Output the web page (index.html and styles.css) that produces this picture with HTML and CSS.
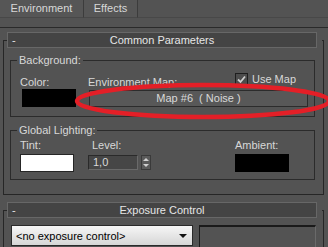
FILE: index.html
```html
<!DOCTYPE html>
<html>
<head>
<meta charset="utf-8">
<link rel="stylesheet" href="styles.css">
</head>
<body>
<div class="tabs">
  <div class="tab tab-env">Environment</div>
  <div class="tab tab-fx">Effects</div>
  <div class="tab-fill"></div>
</div>
<div class="panel">
  <div class="rollout">
    <div class="rollout-head"><span class="minus">-</span><span class="title">Common Parameters</span><span></span></div>
    <div class="rollout-body">
      <fieldset class="group">
        <legend>Background:</legend>
        <div class="bg-row">
          <div class="col col-color">
            <div class="lbl lbl-top">Color:</div>
            <div class="swatch swatch-black swatch-color"></div>
          </div>
          <div class="col col-map">
            <div class="map-top">
              <div class="lbl lbl-top">Environment Map:</div>
              <div class="check">
                <span class="box"><svg width="11" height="11" viewBox="0 0 11 11"><path d="M2 5.5 L4.5 8 L9 2.5" fill="none" stroke="#cfcfcf" stroke-width="1.8"/></svg></span>
                <span>Use Map</span>
              </div>
            </div>
            <div class="map-btn">Map #6&nbsp; ( Noise )</div>
          </div>
        </div>
      </fieldset>
      <fieldset class="group group-gl">
        <legend>Global Lighting:</legend>
        <div class="gl-row">
          <div class="col col-tint">
            <div class="lbl">Tint:</div>
            <div class="swatch swatch-white"></div>
          </div>
          <div class="col col-level">
            <div class="lbl lbl-level">Level:</div>
            <div class="spinner">
              <div class="spin-field">1,0</div>
              <div class="spin-arrows">
                <span class="up"></span>
                <span class="down"></span>
              </div>
            </div>
          </div>
          <div class="col col-amb">
            <div class="lbl">Ambient:</div>
            <div class="swatch swatch-black"></div>
          </div>
        </div>
      </fieldset>
    </div>
  </div>
  <div class="rollout rollout-exp">
    <div class="rollout-head"><span class="minus">-</span><span class="title">Exposure Control</span><span></span></div>
    <div class="rollout-body exp-body">
      <div class="exp-row">
        <div class="dropdown"><span>&lt;no exposure control&gt;</span><span class="arrow"></span></div>
        <div class="exp-box"></div>
      </div>
    </div>
  </div>
</div>
<svg class="annot" width="328" height="247" viewBox="0 0 328 247">
  <ellipse cx="203" cy="101" rx="126" ry="16" fill="none" stroke="#e41f27" stroke-width="4.5"/>
</svg>
</body>
</html>
```
FILE: styles.css
```css
* { box-sizing: border-box; }
html, body { margin: 0; padding: 0; }
body {
  width: 328px;
  height: 247px;
  overflow: hidden;
  position: relative;
  background: #535353;
  font-family: "Liberation Sans", Arial, sans-serif;
  font-size: 11px;
  color: #d8d8d8;
}
.tabs { display: flex; height: 18px; }
.tab {
  height: 18px;
  line-height: 17px;
  text-align: center;
  border-right: 1px solid #3c3c3c;
  border-bottom: 1px solid #484848;
  background: #565656;
}
.tab-env { width: 84px; }
.tab-fx { width: 54px; }
.tab-fill { flex: 1; border-bottom: 1px solid #484848; }

.panel {
  margin-top: 9px;
  border-top: 1px solid #2a2a2a;
  padding-top: 4px;
}
.rollout-exp { margin-top: 7px; }
.rollout-head {
  position: relative;
  z-index: 1;
  margin: 0 11px 0 7px;
  height: 16px;
  border: 1px solid #676767;
  background: #444444;
  display: grid;
  grid-template-columns: 20px 1fr 20px;
  line-height: 14px;
  color: #e6e6e6;
}
.minus { padding-left: 4px; }
.title { text-align: center; }

.rollout-body {
  position: relative;
  margin: -8px 4px 0 3px;
  border: 1px solid #262626;
  border-top: 0;
  padding: 14px 8px 14px 6px;
}
.rollout-body::before,
.rollout-body::after {
  content: "";
  position: absolute;
  top: 0;
  height: 1px;
  background: #262626;
}
.rollout-body::before { left: -1px; width: 4px; }
.rollout-body::after { right: -1px; width: 2px; }

.group {
  margin: 0;
  padding: 0 0 9px 0;
  border: 1px solid #2b2b2b;
  min-width: 0;
}
.group legend {
  margin-left: 6px;
  padding: 0 2px;
  line-height: 13px;
}
.group-gl { margin-top: 7px; padding-bottom: 7px; }

.lbl { line-height: 13px; height: 13px; white-space: nowrap; }
.col { display: flex; flex-direction: column; }

.bg-row { display: flex; margin-top: 6px; height: 34px; }
.col-color { margin-left: 9px; width: 68px; }
.lbl-top { margin-top: 3px; }
.swatch { width: 54px; height: 18px; border: 1px solid #262626; }
.swatch-black { background: #000; border-color: #000; }
.swatch-color { margin-left: 2px; }
.swatch-white { background: #ffffff; margin-top: 2px; }
.col-map { width: 220px; }
.map-top {
  display: grid;
  grid-template-columns: 147px auto;
  height: 17px;
}
.check {
  display: flex;
  align-items: center;
  gap: 4px;
  height: 13px;
  line-height: 13px;
}
.box {
  width: 13px;
  height: 13px;
  border: 1px solid #1e1e1e;
  background: #4c4c4c;
  display: flex;
  align-items: center;
  justify-content: center;
}
.box svg { display: block; }
.map-btn {
  margin: 1px 0 0 1px;
  width: 219px;
  height: 17px;
  border: 1px solid #2c2c2c;
  background: #585858;
  text-align: center;
  line-height: 15px;
}

.gl-row { display: flex; margin-top: 2px; }
.col-tint { margin-left: 9px; width: 68px; }
.col-level { width: 147px; }
.lbl-level { padding-left: 4px; }
.col-amb .swatch { margin-top: 2px; }
.spinner { display: flex; gap: 3px; margin-top: 3px; }
.spin-field {
  width: 50px;
  height: 15px;
  border: 1px solid #6a6a6a;
  border-top-color: #2a2a2a;
  border-left-color: #2a2a2a;
  background: #464646;
  line-height: 13px;
  padding-left: 4px;
}
.spin-arrows {
  width: 10px;
  height: 15px;
  border: 1px solid #3a3a3a;
  background: #5a5a5a;
  display: flex;
  flex-direction: column;
  align-items: center;
  justify-content: space-around;
}
.spin-arrows span {
  width: 0;
  height: 0;
  border-left: 3px solid transparent;
  border-right: 3px solid transparent;
}
.spin-arrows .up { border-bottom: 3px solid #d0d0d0; }
.spin-arrows .down { border-top: 3px solid #d0d0d0; }

.exp-body { padding: 15px 0 0 7px; height: 37px; border-bottom: 0; }
.exp-row { display: flex; gap: 6px; }
.dropdown {
  width: 182px;
  height: 21px;
  border: 1px solid #2a2a2a;
  background: linear-gradient(#f6f6f6, #d6d6d6);
  color: #000;
  display: flex;
  align-items: center;
  justify-content: space-between;
  padding: 0 4px 0 4px;
  font-size: 11px;
}
.dropdown .arrow {
  width: 0;
  height: 0;
  border-left: 4px solid transparent;
  border-right: 4px solid transparent;
  border-top: 4px solid #111;
  margin-right: 1px;
}
.exp-box {
  width: 117px;
  height: 22px;
  border-top: 2px solid #1a1a1a;
  border-left: 1px solid #1a1a1a;
  border-right: 1px solid #6a6a6a;
}

.annot {
  position: absolute;
  left: 0;
  top: 0;
  pointer-events: none;
}
```
